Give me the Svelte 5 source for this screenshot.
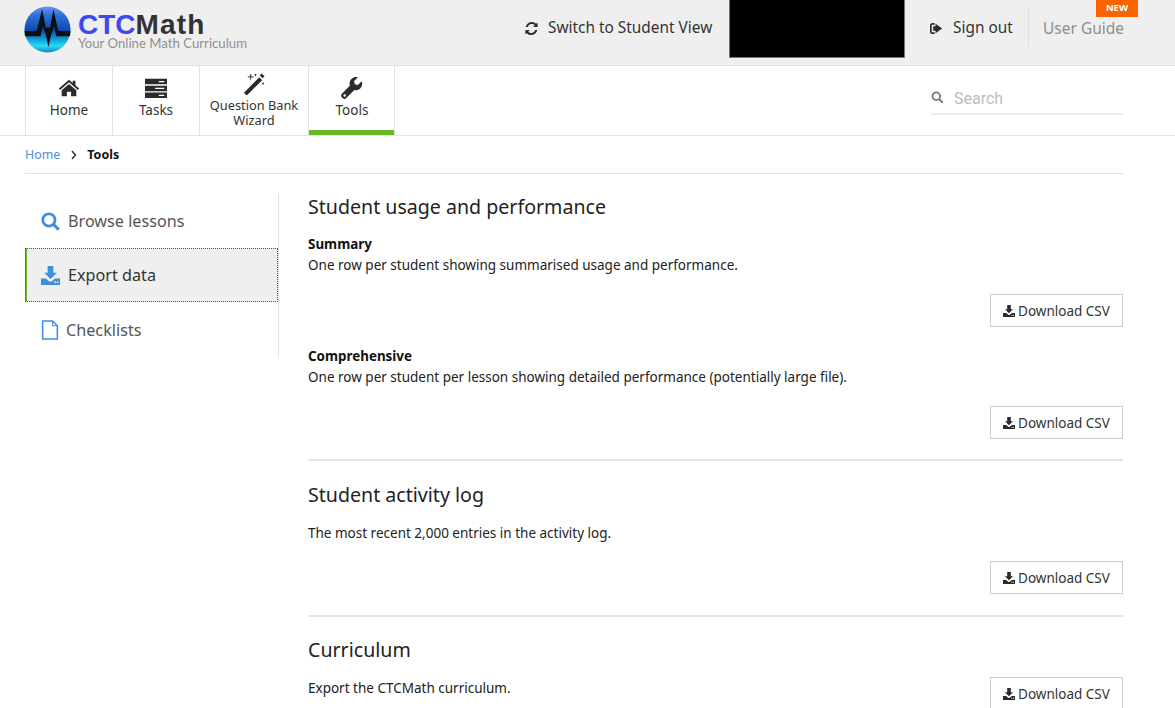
<script>
  const tabs = ['Home', 'Tasks'];
</script>

{#snippet dl(cls)}
  <svg class={cls} viewBox="0 0 16 16" aria-hidden="true"><path d="M5.6 0h4.8v5.6h3L8 11 2.600 5.600h3z"/><path d="M0 10.500h4.300L6.500 12.700c.8.800 2.200.8 3 0l2.200-2.200H16V16H0z"/><rect x="11.300" y="13" width="1.300" height="1.300" fill="var(--hole,#fff)"/><rect x="13.300" y="13" width="1.300" height="1.300" fill="var(--hole,#fff)"/></svg>
{/snippet}

{#snippet btn()}
  <div class="actions"><button class="csv">{@render dl('dlicon')}Download CSV</button></div>
{/snippet}

<div class="page">
  <header class="top">
    <div class="logo">
      <svg class="globe" viewBox="0 0 48 48" aria-hidden="true">
        <defs>
          <linearGradient id="g" x1="0" y1="0" x2="0" y2="1">
            <stop offset="0" stop-color="#6a9ae8"/>
            <stop offset="0.18" stop-color="#2f72dc"/>
            <stop offset="0.52" stop-color="#0b4aa8"/>
            <stop offset="0.68" stop-color="#0f8ed0"/>
            <stop offset="0.86" stop-color="#26dcf2"/>
            <stop offset="1" stop-color="#0c86c6"/>
          </linearGradient>
        </defs>
        <circle cx="24" cy="24" r="23.500" fill="url(#g)"/>
        <path d="M.5 25.500H13L18.500 3l4 20 2-2 2 2L30 3l5 22.500h12.500L47 31H33l-2-10-3 7-3 14-3-14-3-7-2 10H1z" fill="#0c0f14"/>
      </svg>
      <div class="brand">
        <div class="name"><span class="ctc">CTC</span><span class="math">Math</span></div>
        <div class="tag">Your Online Math Curriculum</div>
      </div>
    </div>
    <div class="topright">
      <a class="toplink switch">
        <svg class="ticon" viewBox="0 0 16 16" aria-hidden="true"><path d="M14.500 1.500v4.800H9.700l1.800-1.800A4.500 4.500 0 0 0 4 6.300H1.900A6.600 6.600 0 0 1 13 3zM1.500 14.500V9.700h4.800l-1.800 1.800A4.500 4.500 0 0 0 12 9.700h2.100A6.600 6.600 0 0 1 3 13z"/></svg>
        Switch to Student View
      </a>
      <div class="blackbox"></div>
      <a class="toplink signout">
        <svg class="ticon" viewBox="0 0 16 16" aria-hidden="true"><path d="M6 3H3.500A1.500 1.500 0 0 0 2 4.500v7A1.500 1.500 0 0 0 3.500 13H6" fill="none" stroke="currentColor" stroke-width="1.800"/><path d="M7 5.500V3l7 5-7 5v-2.500H4.500v-5z"/></svg>
        Sign out
      </a>
      <div class="sep"></div>
      <a class="guide">User Guide</a>
      <span class="new">NEW</span>
    </div>
  </header>

  <nav class="navbar">
    <div class="tabs">
      <a class="tab t1">
        <svg class="navicon" viewBox="0 0 24 24" aria-hidden="true"><path d="M12 3 1 12.600l1.300 1.500L12 5.800l9.700 8.300 1.300-1.500-4-3.500V4h-3v2.500z"/><path d="M12 7.600 4 14.400V21h5.700v-5h4.600v5H20v-6.600z"/></svg>
        <span>Home</span>
      </a>
      <a class="tab t2">
        <svg class="navicon" viewBox="0 0 24 24" aria-hidden="true"><path d="M0 2h24v6H0zM0 9.500h24v6H0zM0 17h24v6H0z"/><path d="M15 4.300h6v1.400h-6zM11 11.800h10v1.400H11zM15 19.300h6v1.400h-6z" fill="#fff"/></svg>
        <span>Tasks</span>
      </a>
      <a class="tab t3">
        <svg class="wand" viewBox="0 0 24 24" aria-hidden="true"><path d="M1 20.500 17 4.500l3 3L4 23.500z"/><path d="m17.500 2.500 2-2 3 3-2 2z"/><path d="M8 1v6M5 4h6M13 1v2M12 2h2M21 10v2M20 11h2" stroke="#2b2b2b" stroke-width="1" fill="none"/></svg>
        <span>Question Bank<br />Wizard</span>
      </a>
      <a class="tab t4 active">
        <svg class="navicon" viewBox="0 0 24 24" aria-hidden="true"><path d="M23 6.200c0-.6-.1-1.200-.3-1.700l-4.300 4.200-3.300-.9-.9-3.300L18.400.3A7 7 0 0 0 9.800 9.400L1 18.200a3 3 0 0 0 0 4.100l.7.700a3 3 0 0 0 4.100 0l8.800-8.800A7 7 0 0 0 23 6.200zM4 21.500a1.400 1.400 0 1 1 0-2.800 1.400 1.400 0 0 1 0 2.800z"/></svg>
        <span>Tools</span>
      </a>
    </div>
    <div class="search">
      <svg class="sicon" viewBox="0 0 16 16" aria-hidden="true"><circle cx="6.500" cy="6.500" r="4.700" fill="none" stroke="#777" stroke-width="2.200"/><path d="m10 10 4.500 4.500" stroke="#777" stroke-width="2.600"/></svg>
      <span>Search</span>
    </div>
  </nav>

  <div class="wrap">
    <div class="crumbs">
      <a class="home">Home</a>
      <svg class="chev" viewBox="0 0 8 10" aria-hidden="true"><path d="m2 1 3.500 4L2 9" fill="none" stroke="#333" stroke-width="1.500"/></svg>
      <strong>Tools</strong>
    </div>

    <div class="cols">
      <aside class="side">
        <a class="item browse">
          <svg class="sideicon" viewBox="0 0 18 18" aria-hidden="true"><circle cx="7.500" cy="7.500" r="5.800" fill="none" stroke="#3f8fdc" stroke-width="2.600"/><path d="m11.800 11.800 5 5" stroke="#3f8fdc" stroke-width="3"/></svg>
          Browse lessons
        </a>
        <a class="item current">
          <span class="sidedl">{@render dl('sideicon')}</span>
          Export data
        </a>
        <a class="item check">
          <svg class="fileicon" viewBox="0 0 16 19" aria-hidden="true"><path d="M1 1h9.500L15 5.500V18H1z" fill="#fff" stroke="#3f8fdc" stroke-width="1.500"/><path d="M10.500 1v4.500H15" fill="none" stroke="#3f8fdc" stroke-width="1"/></svg>
          Checklists
        </a>
      </aside>

      <main class="content">
        <section class="first">
          <h2>Student usage and performance</h2>
          <h3>Summary</h3>
          <p>One row per student showing summarised usage and performance.</p>
          {@render btn()}
          <h3 class="second">Comprehensive</h3>
          <p>One row per student per lesson showing detailed performance (potentially large file).</p>
          {@render btn()}
        </section>
        <section class="middle">
          <h2>Student activity log</h2>
          <p class="lead">The most recent 2,000 entries in the activity log.</p>
          {@render btn()}
        </section>
        <section class="last">
          <h2>Curriculum</h2>
          <div class="lastrow">
            <p class="lead">Export the CTCMath curriculum.</p>
            <button class="csv">{@render dl('dlicon')}Download CSV</button>
          </div>
        </section>
      </main>
    </div>
  </div>
</div>

<style>
  :global(body) { margin: 0; background: #fff; font-family: "Noto Sans", "Open Sans", sans-serif; color: #222; }
  :global(html), :global(body) { overflow: hidden; height: 708px; }
  .page { width: 1175px; height: 708px; overflow: hidden; --hole: #fff; }
  a { text-decoration: none; color: inherit; }

  .top { height: 66px; box-sizing: border-box; background: #efefef; border-bottom: 1px solid #e2e2e2; display: flex; justify-content: space-between; padding-left: 24px; }
  .logo { display: flex; align-items: flex-start; gap: 7px; padding-top: 6px; }
  .globe { width: 47px; height: 47px; flex: none; }
  .brand { margin-top: 7px; }
  .name { font-family: "Liberation Sans", sans-serif; font-weight: 700; font-size: 28px; line-height: 24px; }
  .ctc { color: #3c49f0; }
  .math { color: #333; letter-spacing: 1.200px; }
  .tag { font-family: "Lato", sans-serif; font-size: 13.200px; line-height: 13px; color: #8f8f8f; }

  .topright { position: relative; display: flex; align-items: flex-start; width: 651px; box-sizing: border-box; }
  .toplink { display: flex; align-items: center; gap: 9px; font-size: 15.400px; line-height: 22px; color: #333; padding-top: 17px; white-space: nowrap; }
  .ticon { width: 15px; height: 15px; fill: #2b2b2b; color: #2b2b2b; flex: none; }
  .switch { width: 205px; }
  .blackbox { width: 176px; height: 58px; background: #000; border: 1px solid #777; border-top: 0; box-sizing: border-box; flex: none; }
  .signout { margin-left: 24px; width: 84px; }
  .sep { width: 1px; height: 38px; background: #ddd; margin: 8px 14px 0 15px; flex: none; }
  .guide { font-size: 15.500px; line-height: 22px; color: #8e8e8e; padding-top: 17px; white-space: nowrap; }
  .new { position: absolute; left: 572px; top: 0; width: 42px; height: 17px; background: #f96300; color: #fff; font-size: 9.500px; font-weight: 700; line-height: 16px; text-align: center; }

  .navbar { height: 70px; box-sizing: border-box; border-bottom: 1px solid #e2e2e2; display: flex; justify-content: space-between; padding-left: 25px; }
  .tabs { display: flex; height: 69px; }
  .tab { box-sizing: border-box; border-left: 1px solid #e2e2e2; display: flex; flex-direction: column; align-items: center; font-size: 13.500px; line-height: 16px; color: #333; text-align: center; padding-top: 11px; }
  .t1 { width: 87px; }
  .t2 { width: 87px; }
  .t3 { width: 109px; padding-top: 7px; line-height: 15px; font-size: 12.800px; }
  .t4 { width: 87px; border-right: 1px solid #e2e2e2; padding-left: 1px; }
  .active { box-shadow: inset 0 -5px 0 #69b52c; }
  .navicon { width: 22px; height: 22px; fill: #2b2b2b; margin-bottom: 3px; }
  .wand { width: 23px; height: 23px; fill: #2b2b2b; margin-bottom: 2px; }

  .search { width: 193px; height: 35px; box-sizing: border-box; margin: 14px 51px 0 0; border-bottom: 2px solid #eee; display: flex; align-items: flex-start; gap: 10px; padding-top: 9px; font-family: "Roboto", sans-serif; font-size: 16px; line-height: 19px; color: #bdbdbd; }
  .sicon { width: 13px; height: 13px; margin-top: 2px; flex: none; }

  .wrap { padding: 0 51px 0 25px; }
  .crumbs { height: 38px; box-sizing: border-box; border-bottom: 1px solid #e2e2e2; display: flex; align-items: center; font-size: 12.400px; }
  .home { color: #4a8fd8; }
  .chev { width: 8px; height: 10px; margin: 0 9px 0 10px; }
  .crumbs strong { font-weight: 700; color: #111; font-size: 12.500px; }

  .cols { display: flex; align-items: flex-start; margin-top: 20px; }
  .side { width: 254px; flex: none; box-sizing: border-box; height: 163px; border-right: 1px solid #e2e2e2; }
  .item { height: 54px; box-sizing: border-box; display: flex; align-items: center; gap: 8px; padding-left: 16px; font-size: 16.200px; color: #555; }
  .current { background: #efefef; color: #333; outline: 1px dotted #555; outline-offset: -1px; border-left: 2px solid #69b52c; padding-left: 14px; width: 253px; }
  .check { height: 55px; padding-top: 1px; gap: 7px; }
  .sideicon { width: 19px; height: 19px; fill: #3f8fdc; display: block; }
  .sidedl { --hole: #efefef; display: block; }
  .fileicon { width: 18px; height: 20px; flex: none; }

  .content { flex: 1; padding-left: 29px; margin-right: 1px; }
  section { border-bottom: 2px solid #e4e4e4; }
  section.first { height: 268px; box-sizing: border-box; margin-top: -1px; }
  section.middle { height: 156px; box-sizing: border-box; }
  section.middle .actions { margin-top: 18px; }
  section.last { border-bottom: 0; }
  h2 { margin: 0; font-size: 19.600px; font-weight: 400; line-height: 27px; color: #222; }
  section.middle h2 { padding-top: 20px; }
  section.last h2 { padding-top: 19px; }
  h3 { margin: 14px 0 0; font-size: 13.400px; font-weight: 700; line-height: 20px; color: #111; }
  h3.second { margin-top: 19px; }
  p { margin: 1px 0 0; font-size: 13.500px; line-height: 20px; color: #222; }
  .lead { margin-top: 15px; }
  .actions { display: flex; justify-content: flex-end; margin-top: 19px; }
  .csv { width: 133px; height: 33px; box-sizing: border-box; background: #fff; border: 1px solid #ccc; border-radius: 0; font: inherit; font-size: 13.500px; color: #333; display: flex; align-items: center; justify-content: center; gap: 3px; padding: 0; white-space: nowrap; }
  .dlicon { width: 12px; height: 12px; fill: #2b2b2b; flex: none; }
  .lastrow { display: flex; justify-content: space-between; align-items: flex-start; }
  .lastrow .csv { margin-top: 14px; flex: none; }
</style>
